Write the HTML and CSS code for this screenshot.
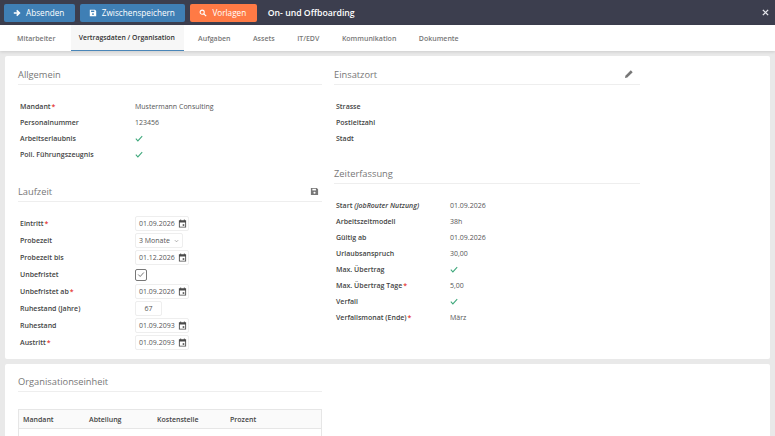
FILE: index.html
```html
<!DOCTYPE html>
<html lang="de">
<head>
    <meta charset="UTF-8">
    <title>On- und Offboarding</title>
    <link rel="stylesheet" href="styles.css">
</head>
<body>
    <header class="topbar">
        <button class="btn btn-blue">
            <svg class="btn-icon" viewBox="0 0 10 10"><path d="M1 5h6M4.6 1.8 8 5 4.6 8.200" fill="none" stroke="currentColor" stroke-width="2"/></svg>
            Absenden
        </button>
        <button class="btn btn-blue">
            <svg class="btn-icon" viewBox="0 0 10 10"><path d="M1 1h6.500L9 2.500V9H1z" fill="currentColor"/><rect x="2.600" y="2" width="4" height="1.800" fill="#3f7fb5"/><circle cx="5" cy="6.400" r="1.200" fill="#3f7fb5"/></svg>
            Zwischenspeichern
        </button>
        <button class="btn btn-orange">
            <svg class="btn-icon" viewBox="0 0 10 10"><circle cx="4" cy="4" r="2.600" fill="none" stroke="currentColor" stroke-width="1.300"/><path d="M6 6l3 3" stroke="currentColor" stroke-width="1.500"/></svg>
            Vorlagen
        </button>
        <span class="topbar-title">On- und Offboarding</span>
        <svg class="close-icon" viewBox="0 0 8 8"><path d="M1 1l6 6M7 1 1 7" stroke="#e4e5ea" stroke-width="1.600"/></svg>
    </header>

    <nav class="tabs">
        <a class="tab">Mitarbeiter</a>
        <a class="tab active">Vertragsdaten / Organisation</a>
        <a class="tab">Aufgaben</a>
        <a class="tab">Assets</a>
        <a class="tab">IT/EDV</a>
        <a class="tab">Kommunikation</a>
        <a class="tab">Dokumente</a>
    </nav>

    <main class="content">
        <section class="panel panel-main">
            <div class="col">
                <div class="section-head">
                    <h2>Allgemein</h2>
                </div>
                <div class="rows rows-general">
                    <div class="row"><label>Mandant<i>*</i></label><span>Mustermann Consulting</span></div>
                    <div class="row"><label>Personalnummer</label><span>123456</span></div>
                    <div class="row"><label>Arbeitserlaubnis</label><svg class="check" viewBox="0 0 10 8"><path d="M1 4.200 3.600 7 9 1" fill="none" stroke="#3fa87c" stroke-width="1.300"/></svg></div>
                    <div class="row"><label>Poli. Führungszeugnis</label><svg class="check" viewBox="0 0 10 8"><path d="M1 4.200 3.600 7 9 1" fill="none" stroke="#3fa87c" stroke-width="1.300"/></svg></div>
                </div>

                <div class="section-head head-laufzeit">
                    <h2>Laufzeit</h2>
                    <svg class="head-icon" viewBox="0 0 10 10"><path d="M1 1h6.500L9 2.500V9H1z" fill="#777"/><rect x="2.600" y="2" width="4" height="1.800" fill="#fff"/><circle cx="5" cy="6.400" r="1.200" fill="#fff"/></svg>
                </div>
                <div class="rows rows-term">
                    <div class="row"><label>Eintritt<i>*</i></label><div class="field field-date">01.09.2026<svg class="cal" viewBox="0 0 10 10"><use href="#cal"/></svg></div></div>
                    <div class="row"><label>Probezeit</label><div class="field field-select">3 Monate<svg class="chev" viewBox="0 0 6 4"><path d="M1 1l2 2 2-2" fill="none" stroke="#888" stroke-width=".8"/></svg></div></div>
                    <div class="row"><label>Probezeit bis</label><div class="field field-date">01.12.2026<svg class="cal" viewBox="0 0 10 10"><use href="#cal"/></svg></div></div>
                    <div class="row"><label>Unbefristet</label><div class="checkbox"><svg viewBox="0 0 10 8"><path d="M1.500 4 4 6.500 8.500 1.500" fill="none" stroke="#555" stroke-width="1"/></svg></div></div>
                    <div class="row"><label>Unbefristet ab<i>*</i></label><div class="field field-date">01.09.2026<svg class="cal" viewBox="0 0 10 10"><use href="#cal"/></svg></div></div>
                    <div class="row"><label>Ruhestand (Jahre)</label><div class="field field-num">67</div></div>
                    <div class="row"><label>Ruhestand</label><div class="field field-date">01.09.2093<svg class="cal" viewBox="0 0 10 10"><use href="#cal"/></svg></div></div>
                    <div class="row"><label>Austritt<i>*</i></label><div class="field field-date">01.09.2093<svg class="cal" viewBox="0 0 10 10"><use href="#cal"/></svg></div></div>
                </div>
            </div>

            <div class="col">
                <div class="section-head">
                    <h2>Einsatzort</h2>
                    <svg class="head-icon head-icon-edit" viewBox="0 0 10 10"><path d="M1 9l.4-2.300L6.800 1.300l1.900 1.900L3.300 8.600z" fill="#777"/></svg>
                </div>
                <div class="rows rows-place">
                    <div class="row"><label>Strasse</label></div>
                    <div class="row"><label>Postleitzahl</label></div>
                    <div class="row"><label>Stadt</label></div>
                </div>

                <div class="section-head head-zeit">
                    <h2>Zeiterfassung</h2>
                </div>
                <div class="rows rows-time">
                    <div class="row"><label>Start <em>(JobRouter Nutzung)</em></label><span>01.09.2026</span></div>
                    <div class="row"><label>Arbeitszeitmodell</label><span>38h</span></div>
                    <div class="row"><label>Gültig ab</label><span>01.09.2026</span></div>
                    <div class="row"><label>Urlaubsanspruch</label><span>30,00</span></div>
                    <div class="row"><label>Max. Übertrag</label><svg class="check" viewBox="0 0 10 8"><path d="M1 4.200 3.600 7 9 1" fill="none" stroke="#3fa87c" stroke-width="1.300"/></svg></div>
                    <div class="row"><label>Max. Übertrag Tage<i>*</i></label><span>5,00</span></div>
                    <div class="row"><label>Verfall</label><svg class="check" viewBox="0 0 10 8"><path d="M1 4.200 3.600 7 9 1" fill="none" stroke="#3fa87c" stroke-width="1.300"/></svg></div>
                    <div class="row"><label>Verfallsmonat (Ende)<i>*</i></label><span>März</span></div>
                </div>
            </div>
        </section>

        <section class="panel panel-org">
            <div class="col">
                <div class="section-head">
                    <h2>Organisationseinheit</h2>
                </div>
                <table class="org-table">
                    <thead>
                        <tr><th class="c1">Mandant</th><th class="c2">Abteilung</th><th class="c3">Kostenstelle</th><th>Prozent</th></tr>
                    </thead>
                    <tbody>
                        <tr><td colspan="4"></td></tr>
                    </tbody>
                </table>
            </div>
        </section>
    </main>

    <svg class="sprite" width="0" height="0">
        <symbol id="cal" viewBox="0 0 10 10">
            <path d="M1 1.500h1.500V.5h1v1h3V.5h1v1H9V9.500H1zM2 4v4.500h6V4z" fill="#4a4a4a"/>
            <rect x="5.200" y="5.800" width="1.800" height="1.800" fill="#4a4a4a"/>
        </symbol>
    </svg>
</body>
</html>
```
FILE: styles.css
```css
html, body {
    margin: 0;
    height: 436px;
    overflow: hidden;
}

body {
    font-family: "Open Sans", sans-serif;
    font-size: 7px;
    color: #444;
    background-color: #e9e9e9;
}

.sprite {
    position: absolute;
}

/* top bar */
.topbar {
    display: flex;
    align-items: center;
    height: 25px;
    padding: 0 6px 0 4px;
    background-color: #3c3e4e;
    box-sizing: border-box;
}

.btn {
    display: flex;
    align-items: center;
    gap: 5px;
    height: 18px;
    margin-right: 5px;
    padding: 0 10.500px 0 9px;
    border: none;
    border-radius: 2px;
    color: #fff;
    font-family: inherit;
    font-size: 8.200px;
}

.btn-blue {
    background-color: #3f7fb5;
}

.btn-orange {
    background-color: #ff7a45;
}

.btn-icon {
    width: 8px;
    height: 8px;
}

.topbar-title {
    margin-left: 6px;
    color: #fff;
    font-size: 8.700px;
    font-weight: 600;
}

.close-icon {
    width: 7px;
    height: 7px;
    margin-left: auto;
}

/* tabs */
.tabs {
    display: flex;
    height: 26px;
    padding-left: 5.750px;
    background-color: #fff;
    box-shadow: 0 1px 3px rgba(0, 0, 0, 0.12);
    position: relative;
}

.tab {
    display: flex;
    align-items: center;
    padding: 0 11.250px;
    color: #777;
    font-size: 7px;
    font-weight: 600;
}

.tab.active {
    margin: 0 3px 0 4px;
    padding: 0 9px 0 8px;
    color: #333;
    font-size: 6.850px;
    font-weight: 600;
    background-color: #f7f7f7;
    border-bottom: 1.500px solid #4a86b8;
    box-sizing: border-box;
}

/* panels */
.content {
    padding: 5px 5px 0;
}

.panel {
    background-color: #fff;
    border-radius: 2px;
    padding: 12px 13px 0;
    box-sizing: border-box;
}

.panel-main {
    display: grid;
    grid-template-columns: 304px 306px;
    column-gap: 12px;
    height: 303px;
    margin-bottom: 5px;
}

.panel-org {
    height: 80px;
    padding-top: 11px;
}

.panel-org .col {
    width: 304px;
}

.section-head {
    display: flex;
    align-items: flex-start;
    justify-content: space-between;
    height: 16px;
    border-bottom: 1px solid #eee;
}

.section-head h2 {
    margin: 0;
    color: #777;
    font-size: 9.300px;
    font-weight: 400;
    line-height: 13px;
}

.head-icon {
    width: 9px;
    height: 9px;
    margin: 2px 3px 0 0;
}

.head-icon-edit {
    width: 10px;
    height: 10px;
    margin: 1px 6px 0 0;
}

.head-laufzeit {
    margin-top: 22px;
}

.head-zeit {
    margin-top: 21px;
}

/* rows */
.rows {
    padding: 13px 2px 0;
}

.row {
    display: flex;
    align-items: center;
    height: 16px;
    color: #555;
    font-size: 7px;
}

.row label {
    width: 115px;
    flex: none;
    color: #444;
    font-weight: 600;
}

.row label i {
    color: #e53935;
    font-style: normal;
    margin-left: 1px;
}

.rows-general .row:nth-child(n+3) {
    height: 16.500px;
}

.rows-time label {
    width: 114px;
}

.rows-term .row {
    height: 17px;
}

.check {
    width: 8px;
    height: 7px;
}

/* form fields */
.field {
    display: flex;
    align-items: center;
    height: 15px;
    border: 1px solid #eee;
    border-radius: 2px;
    padding: 0 3px;
    box-sizing: border-box;
    font-size: 7px;
}

.field-date {
    width: 54px;
    justify-content: space-between;
    padding-right: 1px;
}

.field-select {
    width: 48px;
    justify-content: space-between;
}

.field-num {
    width: 27px;
    justify-content: center;
}

.cal {
    width: 9px;
    height: 9px;
}

.chev {
    width: 5px;
    height: 4px;
}

.checkbox {
    display: flex;
    align-items: center;
    justify-content: center;
    width: 10px;
    height: 10px;
    border: 1px solid #777;
    border-radius: 2px;
}

.checkbox svg {
    width: 8px;
    height: 7px;
}

/* table */
.org-table {
    width: 100%;
    margin-top: 17px;
    border: 1px solid #e6e6e6;
    border-collapse: collapse;
    font-size: 7px;
}

.org-table th {
    height: 18px;
    padding: 0 0 0 4px;
    background-color: #fafafa;
    color: #444;
    font-weight: 600;
    text-align: left;
    border-bottom: 1px solid #e6e6e6;
}

.org-table td {
    height: 20px;
}

.org-table .c1 {
    width: 62px;
}

.org-table .c2 {
    width: 64px;
}

.org-table .c3 {
    width: 69px;
}
```
